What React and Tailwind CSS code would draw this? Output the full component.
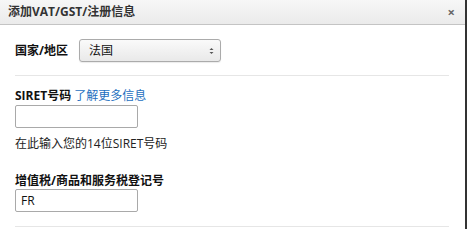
import React from "react";

const font = { fontFamily: '"Open Sans", "Noto Sans CJK SC", sans-serif' };

export default function App() {
  return (
    <div className="w-[467px] h-[229px] bg-[#333333] overflow-hidden" style={font}>
      <div className="w-[465px] h-[229px] bg-white flex flex-col">
        <div className="h-[25px] shrink-0 flex items-center justify-between pl-[8px] pr-[10px] bg-gradient-to-b from-[#f7f7f7] to-[#ebebeb] border-b border-[#c4c4c4]">
          <span className="text-[12px] font-bold text-[#333] leading-none">添加VAT/GST/注册信息</span>
          <span className="text-[13px] font-bold text-[#666] leading-none">×</span>
        </div>
        <div className="px-[15px]">
          <div className="flex items-center h-[50px] pt-[1px]">
            <span className="text-[12px] font-bold text-[#111] w-[64px]">国家/地区</span>
            <div className="w-[142px] h-[23px] rounded-[3px] border border-[#ababab] bg-gradient-to-b from-[#fafafa] to-[#e9e9e9] flex items-center justify-between pl-[9px] pr-[6px] shadow-[0_1px_1px_rgba(0,0,0,0.08)]">
              <span className="text-[12px] text-[#111]">法国</span>
              <svg width="5" height="8" viewBox="0 0 5 8">
                <path d="M0.5 3 L2.5 1 L4.5 3 Z" fill="#555" />
                <path d="M0.5 5 L2.5 7 L4.5 5 Z" fill="#555" />
              </svg>
            </div>
          </div>
          <div className="h-px bg-[#e6e6e6] w-[434px]" />
          <div className="pt-[11px]">
            <div className="text-[12px] leading-[17px]">
              <span className="font-bold text-[#111]">SIRET号码</span>{" "}
              <span className="text-[#1e6fc0]">了解更多信息</span>
            </div>
            <div className="mt-[1px] w-[123px] h-[23px] rounded-[2px] border border-[#a9a9a9] bg-white" />
            <div className="text-[12px] text-[#222] mt-[7px] leading-[17px]">在此输入您的14位SIRET号码</div>
            <div className="text-[12px] font-bold text-[#111] mt-[20px] leading-[17px]">增值税/商品和服务税登记号</div>
            <div className="w-[123px] h-[23px] rounded-[2px] border border-[#a9a9a9] bg-white flex items-center pl-[5px]">
              <span className="text-[12px] text-[#111]">FR</span>
            </div>
            <div className="mt-[14px] h-px bg-[#e6e6e6] w-[434px]" />
          </div>
        </div>
      </div>
    </div>
  );
}
